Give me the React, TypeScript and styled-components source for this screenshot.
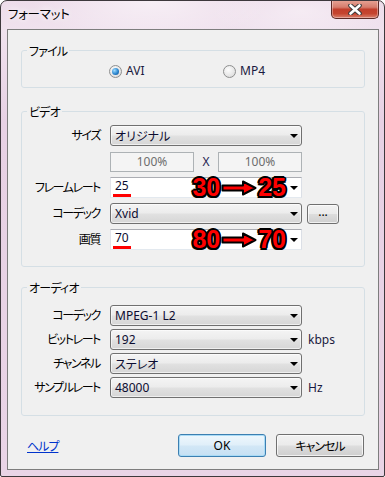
import React from 'react';
import styled, { createGlobalStyle, css } from 'styled-components';

const GlobalStyle = createGlobalStyle`
  html, body { margin: 0; padding: 0; background: #fff; }
  body {
    font-family: "Noto Sans", "Noto Sans CJK JP", sans-serif;
    font-size: 12px;
    color: #000;
  }
  * { box-sizing: border-box; }
`;

const Window = styled.div`
  width: 385px;
  height: 477px;
  display: flex;
  flex-direction: column;
  border: 1px solid #3d383c;
  border-radius: 7px 7px 2px 2px;
  padding: 0 5px 6px 6px;
  overflow: hidden;
  background:
    radial-gradient(ellipse 120px 40px at 150px 0, rgba(255, 255, 255, 0.55), transparent),
    radial-gradient(ellipse 90px 30px at 300px 10px, rgba(255, 255, 255, 0.4), transparent),
    linear-gradient(180deg, #eddcea 0%, #f0e2ee 28px, #e7d1e4 120px, #e9d4e6 100%);
`;

const TitleBar = styled.div`
  flex: none;
  height: 28px;
  display: flex;
  justify-content: space-between;
  align-items: flex-start;
`;

const Title = styled.div`
  padding: 6px 0 0 1px;
  font-size: 12.5px;
  line-height: 16px;
  letter-spacing: -0.3px;
  font-feature-settings: "palt";
  text-shadow: 0 0 6px #fff, 0 0 10px #fff;
`;

const CloseButton = styled.div`
  width: 48px;
  height: 19px;
  margin-top: -1px;
  border: 1px solid #5c2a26;
  border-top: none;
  border-radius: 0 0 5px 5px;
  display: flex;
  align-items: center;
  justify-content: center;
  background: linear-gradient(#e8a597, #d67d6d 40%, #c23f2c 52%, #c5452f 75%, #d9806d);
  box-shadow: inset 0 0 0 1px rgba(255, 255, 255, 0.35);
`;

const Client = styled.div`
  flex: 1;
  display: flex;
  flex-direction: column;
  padding: 0 13px;
  border: 1px solid #7d7d7d;
  background: #f0f0f0;
`;

const Group = styled.fieldset<{ $top: number }>`
  margin: ${(p) => p.$top}px 0 0;
  padding: 0;
  min-width: 0;
  border: 1px solid #d5dfe5;
  border-radius: 3px;
`;

const Legend = styled.legend`
  margin-left: 5px;
  padding: 3px 2px 0;
  line-height: 14px;
  letter-spacing: -0.8px;
  font-feature-settings: "palt";
`;

const RadioRow = styled.div`
  display: grid;
  grid-template-columns: 114px auto;
  padding: 4px 0 8px 87px;
  height: 28px;
`;

const RadioOption = styled.label`
  display: flex;
  align-items: center;
  gap: 4px;
  line-height: 16px;
  color: #1a1a40;
`;

const RadioDot = styled.span<{ $checked?: boolean }>`
  position: relative;
  width: 13px;
  height: 13px;
  border-radius: 50%;
  border: 1px solid #8e8f8f;
  background: radial-gradient(circle at 40% 35%, #fdfdfd, #e2e2e2 70%, #d0d0d0);
  ${(p) =>
    p.$checked &&
    css`
      &::after {
        content: '';
        position: absolute;
        left: 2px;
        top: 2px;
        width: 7px;
        height: 7px;
        border-radius: 50%;
        background: radial-gradient(circle at 35% 35%, #9fdcff, #2b86cf 55%, #0e4a88);
      }
    `}
`;

const Form = styled.div<{ $gap: number; $pad: string }>`
  display: grid;
  grid-template-columns: 83px 192px auto;
  grid-auto-rows: 21px;
  column-gap: 5px;
  row-gap: ${(p) => p.$gap}px;
  padding: ${(p) => p.$pad};
  align-items: center;
`;

const Label = styled.div`
  grid-column: 1;
  text-align: right;
  padding-right: 5px;
  line-height: 21px;
  white-space: nowrap;
  letter-spacing: -1.4px;
  font-feature-settings: "palt";
`;

const Select = styled.div`
  grid-column: 2;
  height: 21px;
  display: flex;
  align-items: center;
  padding: 0 3px 0 4px;
  border: 1px solid #707070;
  border-radius: 3px;
  background: linear-gradient(#f4f4f4, #ececec 48%, #e1e1e1 52%, #d6d6d6);
  box-shadow: inset 0 0 0 1px rgba(255, 255, 255, 0.6);
  color: #0c0c30;
  font-feature-settings: "palt";
`;

const EditCombo = styled.div`
  grid-column: 2;
  height: 21px;
  display: flex;
  align-items: stretch;
  padding: 0 3px 0 2px;
  border: 1px solid;
  border-color: #abadb3 #dbdfe6 #e3e9ef #e2e3ea;
  background: #fff;
  color: #0c0c30;
`;

const Value = styled.span`
  display: flex;
  align-items: center;
  padding: 0 2px;
  border-bottom: 3px solid #f00;
  line-height: 14px;
`;

const Note = styled.span`
  flex: 1;
  display: flex;
  justify-content: flex-end;
  align-items: center;
  padding-right: 4px;
  font-family: "Liberation Sans", sans-serif;
  font-weight: 700;
  font-size: 25px;
  line-height: 21px;
  color: #f00;
  white-space: nowrap;
  text-shadow: -2px 0 #000, 2px 0 #000, 0 -2px #000, 0 2px #000, -1.5px -1.5px #000,
    1.5px -1.5px #000, -1.5px 1.5px #000, 1.5px 1.5px #000;
`;

const NoteArrow = styled.svg`
  flex: none;
  margin: 1px 1px 0 1px;
`;

const Arrow = styled.span`
  margin-left: auto;
  align-self: center;
  width: 0;
  height: 0;
  border-left: 4px solid transparent;
  border-right: 4px solid transparent;
  border-top: 4px solid #000;
`;

const SizeRow = styled.div`
  grid-column: 2;
  display: flex;
  align-items: center;
`;

const SizeBox = styled.div`
  width: 84px;
  height: 20px;
  border: 1px solid #adb2b5;
  background: #f4f4f4;
  color: #6d6d6d;
  text-align: center;
  line-height: 18px;
`;

const Times = styled.span`
  width: 24px;
  text-align: center;
  color: #1e1e50;
`;

const buttonFace = css`
  border: 1px solid #707070;
  border-radius: 3px;
  background: linear-gradient(#f2f2f2, #ebebeb 48%, #dddddd 52%, #cfcfcf);
  box-shadow: inset 0 0 0 1px rgba(255, 255, 255, 0.7);
`;

const SmallButton = styled.div`
  ${buttonFace};
  grid-column: 3;
  width: 32px;
  height: 20px;
  display: flex;
  align-items: center;
  justify-content: center;
  line-height: 10px;
  padding-bottom: 3px;
`;

const Unit = styled.span`
  grid-column: 3;
  padding-left: 1px;
  line-height: 21px;
  color: #1a1a40;
`;

const Footer = styled.div`
  display: flex;
  align-items: center;
  margin-top: 18px;
  padding: 0 1px 0 6px;
`;

const HelpLink = styled.a`
  color: #0033cc;
  text-decoration: underline;
  letter-spacing: -1px;
  font-feature-settings: "palt";
  cursor: pointer;
`;

const Button = styled.div<{ $primary?: boolean }>`
  ${buttonFace};
  width: 88px;
  height: 23px;
  display: flex;
  align-items: center;
  justify-content: center;
  letter-spacing: -1px;
  font-feature-settings: "palt";
  ${(p) =>
    p.$primary
      ? css`
          margin-left: auto;
          letter-spacing: 0;
          border-color: #3c7fb1;
          background: linear-gradient(#eef7fd, #e0eff9 48%, #d2e7f6 52%, #c6e0f3);
          box-shadow: inset 0 0 0 1px #a9dbf6;
        `
      : css`
          margin-left: 10px;
        `}
`;

function CloseIcon() {
  return (
    <svg width="14" height="11" viewBox="0 0 14 11">
      <path d="M2.5 1.5 L11.5 9.5 M11.5 1.5 L2.5 9.5" stroke="#3b3b3b" strokeWidth="4.6" strokeLinecap="round" />
      <path d="M2.5 1.5 L11.5 9.5 M11.5 1.5 L2.5 9.5" stroke="#fff" strokeWidth="2.6" strokeLinecap="round" />
    </svg>
  );
}

function Change({ from, to }: { from: string; to: string }) {
  return (
    <Note>
      {from}
      <NoteArrow width="36" height="16" viewBox="0 0 36 16">
        <path
          d="M1.5 5.5 H22 V1.5 L34.5 8 L22 14.5 V10.5 H1.5 Z"
          fill="#f00"
          stroke="#000"
          strokeWidth="2"
          strokeLinejoin="round"
        />
      </NoteArrow>
      {to}
    </Note>
  );
}

export default function App() {
  return (
    <>
      <GlobalStyle />
      <Window>
        <TitleBar>
          <Title>フォーマット</Title>
          <CloseButton>
            <CloseIcon />
          </CloseButton>
        </TitleBar>
        <Client>
          <Group $top={12}>
            <Legend>ファイル</Legend>
            <RadioRow>
              <RadioOption>
                <RadioDot $checked />
                AVI
              </RadioOption>
              <RadioOption>
                <RadioDot />
                MP4
              </RadioOption>
            </RadioRow>
          </Group>

          <Group $top={15}>
            <Legend>ビデオ</Legend>
            <Form $gap={5} $pad="5px 0 16px 0">
              <Label>サイズ</Label>
              <Select>
                オリジナル
                <Arrow />
              </Select>

              <Label />
              <SizeRow>
                <SizeBox>100%</SizeBox>
                <Times>X</Times>
                <SizeBox>100%</SizeBox>
              </SizeRow>

              <Label>フレームレート</Label>
              <EditCombo>
                <Value>25</Value>
                <Change from="30" to="25" />
                <Arrow />
              </EditCombo>

              <Label>コーデック</Label>
              <Select>
                Xvid
                <Arrow />
              </Select>
              <SmallButton>...</SmallButton>

              <Label>画質</Label>
              <EditCombo>
                <Value>70</Value>
                <Change from="80" to="70" />
                <Arrow />
              </EditCombo>
            </Form>
          </Group>

          <Group $top={12}>
            <Legend>オーディオ</Legend>
            <Form $gap={3} $pad="9px 0 17px 0">
              <Label>コーデック</Label>
              <Select>
                MPEG-1 L2
                <Arrow />
              </Select>

              <Label>ビットレート</Label>
              <Select>
                192
                <Arrow />
              </Select>
              <Unit>kbps</Unit>

              <Label>チャンネル</Label>
              <Select>
                ステレオ
                <Arrow />
              </Select>

              <Label>サンプルレート</Label>
              <Select>
                48000
                <Arrow />
              </Select>
              <Unit>Hz</Unit>
            </Form>
          </Group>

          <Footer>
            <HelpLink>ヘルプ</HelpLink>
            <Button $primary>OK</Button>
            <Button>キャンセル</Button>
          </Footer>
        </Client>
      </Window>
    </>
  );
}
